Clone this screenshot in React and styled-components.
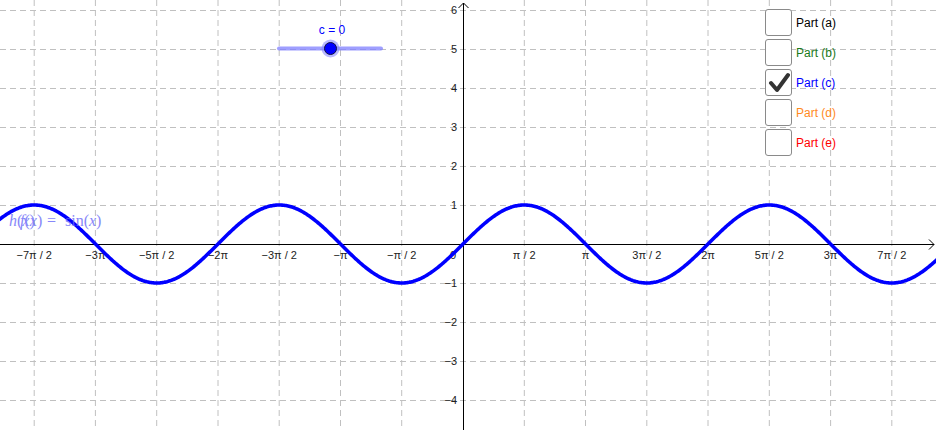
import React from "react";
import styled, { createGlobalStyle } from "styled-components";

const W = 936;
const H = 430;
const X0 = 463;
const Y0 = 244;
const U = 39;
const HALF_PI = (Math.PI / 2) * U;

const GlobalStyle = createGlobalStyle`
  html, body { margin: 0; padding: 0; background: #ffffff; }
  body { font-family: "Liberation Sans", Arial, sans-serif; }
`;

const Stage = styled.div`
  position: relative;
  width: ${W}px;
  height: ${H}px;
  overflow: hidden;
  background: #ffffff;
`;

const Graph = styled.svg`
  display: block;
  width: ${W}px;
  height: ${H}px;
`;

const CheckPanel = styled.div`
  position: absolute;
  left: 765px;
  top: 9px;
  display: flex;
  flex-direction: column;
  gap: 3px;
`;

const Row = styled.label`
  display: flex;
  align-items: center;
  gap: 4px;
  height: 27px;
`;

const Box = styled.span`
  box-sizing: border-box;
  width: 27px;
  height: 27px;
  border: 1.5px solid #8a8a8a;
  border-radius: 3px;
  background: #ffffff;
  display: flex;
  align-items: center;
  justify-content: center;
`;

const PartText = styled.span`
  font-family: "Liberation Sans", Arial, sans-serif;
  font-size: 12px;
  color: ${(p) => p.$color};
  line-height: 1;
`;

const parts = [
  { label: "Part (a)", color: "#000000", checked: false },
  { label: "Part (b)", color: "#1a7a1a", checked: false },
  { label: "Part (c)", color: "#0000ff", checked: true },
  { label: "Part (d)", color: "#ff8a1e", checked: false },
  { label: "Part (e)", color: "#ff0000", checked: false },
];

const xLabels = [
  [-7, "\u22127\u03c0 / 2"],
  [-6, "\u22123\u03c0"],
  [-5, "\u22125\u03c0 / 2"],
  [-4, "\u22122\u03c0"],
  [-3, "\u22123\u03c0 / 2"],
  [-2, "\u2212\u03c0"],
  [-1, "\u2212\u03c0 / 2"],
  [1, "\u03c0 / 2"],
  [2, "\u03c0"],
  [3, "3\u03c0 / 2"],
  [4, "2\u03c0"],
  [5, "5\u03c0 / 2"],
  [6, "3\u03c0"],
  [7, "7\u03c0 / 2"],
];

const yLabels = [6, 5, 4, 3, 2, 1, -1, -2, -3, -4];

function curvePath() {
  const pts = [];
  for (let px = -4; px <= W + 4; px += 1) {
    const y = Y0 - U * Math.sin((px - X0) / U);
    pts.push(`${px},${y.toFixed(2)}`);
  }
  return "M" + pts.join(" L");
}

function Check() {
  return (
    <svg width="22" height="22" viewBox="0 0 22 22">
      <polyline
        points="3,11 9,18 20,3"
        fill="none"
        stroke="#333333"
        strokeWidth="4"
        strokeLinecap="round"
        strokeLinejoin="round"
      />
    </svg>
  );
}

export default function App() {
  const vLines = [];
  for (let k = -7; k <= 7; k++) {
    if (k === 0) continue;
    vLines.push(X0 + k * HALF_PI);
  }
  const hLines = [];
  for (let j = -4; j <= 6; j++) {
    if (j === 0) continue;
    hLines.push(Y0 - j * U);
  }
  const labelFont = { fontFamily: '"Liberation Sans", Arial, sans-serif', fontSize: 11 };
  const mathFont = { fontFamily: '"Liberation Serif", "Times New Roman", serif', fontSize: 16 };

  return (
    <Stage>
      <GlobalStyle />
      <Graph viewBox={`0 0 ${W} ${H}`}>
        <g stroke="#c0c0c0" strokeWidth="1" strokeDasharray="6 4">
          {vLines.map((x) => (
            <line key={"v" + x} x1={x.toFixed(1)} y1="0" x2={x.toFixed(1)} y2={H} />
          ))}
          {hLines.map((y) => (
            <line key={"h" + y} x1="0" y1={y + 0.5} x2={W} y2={y + 0.5} />
          ))}
        </g>

        <g stroke="#000000" strokeWidth="1" fill="none">
          <line x1="0" y1={Y0 + 0.5} x2={W - 2} y2={Y0 + 0.5} />
          <polyline points={`${W - 7},${Y0 - 4.5} ${W - 2},${Y0 + 0.5} ${W - 7},${Y0 + 5.5}`} />
          <line x1={X0 + 0.5} y1="3" x2={X0 + 0.5} y2={H} />
          <polyline points={`${X0 - 4.5},8 ${X0 + 0.5},3 ${X0 + 5.5},8`} />
        </g>

        <g fill="#222222" style={labelFont}>
          {xLabels.map(([k, t]) => (
            <text key={"xl" + k} x={X0 + k * HALF_PI} y={Y0 + 15} textAnchor="middle">
              {t}
            </text>
          ))}
          <text x={X0 - 10} y={Y0 + 15} textAnchor="middle">0</text>
          {yLabels.map((j) => (
            <text key={"yl" + j} x={X0 - 6} y={Y0 - j * U + 4} textAnchor="end">
              {j < 0 ? "\u2212" + -j : j}
            </text>
          ))}
        </g>

        <path d={curvePath()} fill="none" stroke="#0000ff" strokeWidth="3.6" strokeLinejoin="round" />

        <g fill="#6a6af8" opacity="0.8" style={mathFont}>
          <text x="9" y="226">
            <tspan fontStyle="italic">h</tspan>(<tspan fontStyle="italic">x</tspan>)
          </text>
          <text x="20" y="226">
            <tspan fontStyle="italic">f</tspan>(<tspan fontStyle="italic">x</tspan>)
          </text>
          <text x="47" y="226">=</text>
          <text x="65" y="226">
            sin(<tspan fontStyle="italic">x</tspan>)
          </text>
        </g>

        <g>
          <text
            x="332"
            y="34"
            textAnchor="middle"
            fill="#0000ff"
            style={{ fontFamily: '"Liberation Sans", Arial, sans-serif', fontSize: 12 }}
          >
            c = 0
          </text>
          <line x1="279" y1="48.5" x2="381" y2="48.5" stroke="#7f7fff" strokeOpacity="0.75" strokeWidth="4" strokeLinecap="round" />
          <circle cx="330.5" cy="48.5" r="9" fill="#8080ff" fillOpacity="0.55" />
          <circle cx="330.5" cy="48.5" r="6" fill="#0000ff" stroke="#101040" strokeWidth="1" />
        </g>
      </Graph>

      <CheckPanel>
        {parts.map((p) => (
          <Row key={p.label}>
            <Box>{p.checked && <Check />}</Box>
            <PartText $color={p.color}>{p.label}</PartText>
          </Row>
        ))}
      </CheckPanel>
    </Stage>
  );
}
